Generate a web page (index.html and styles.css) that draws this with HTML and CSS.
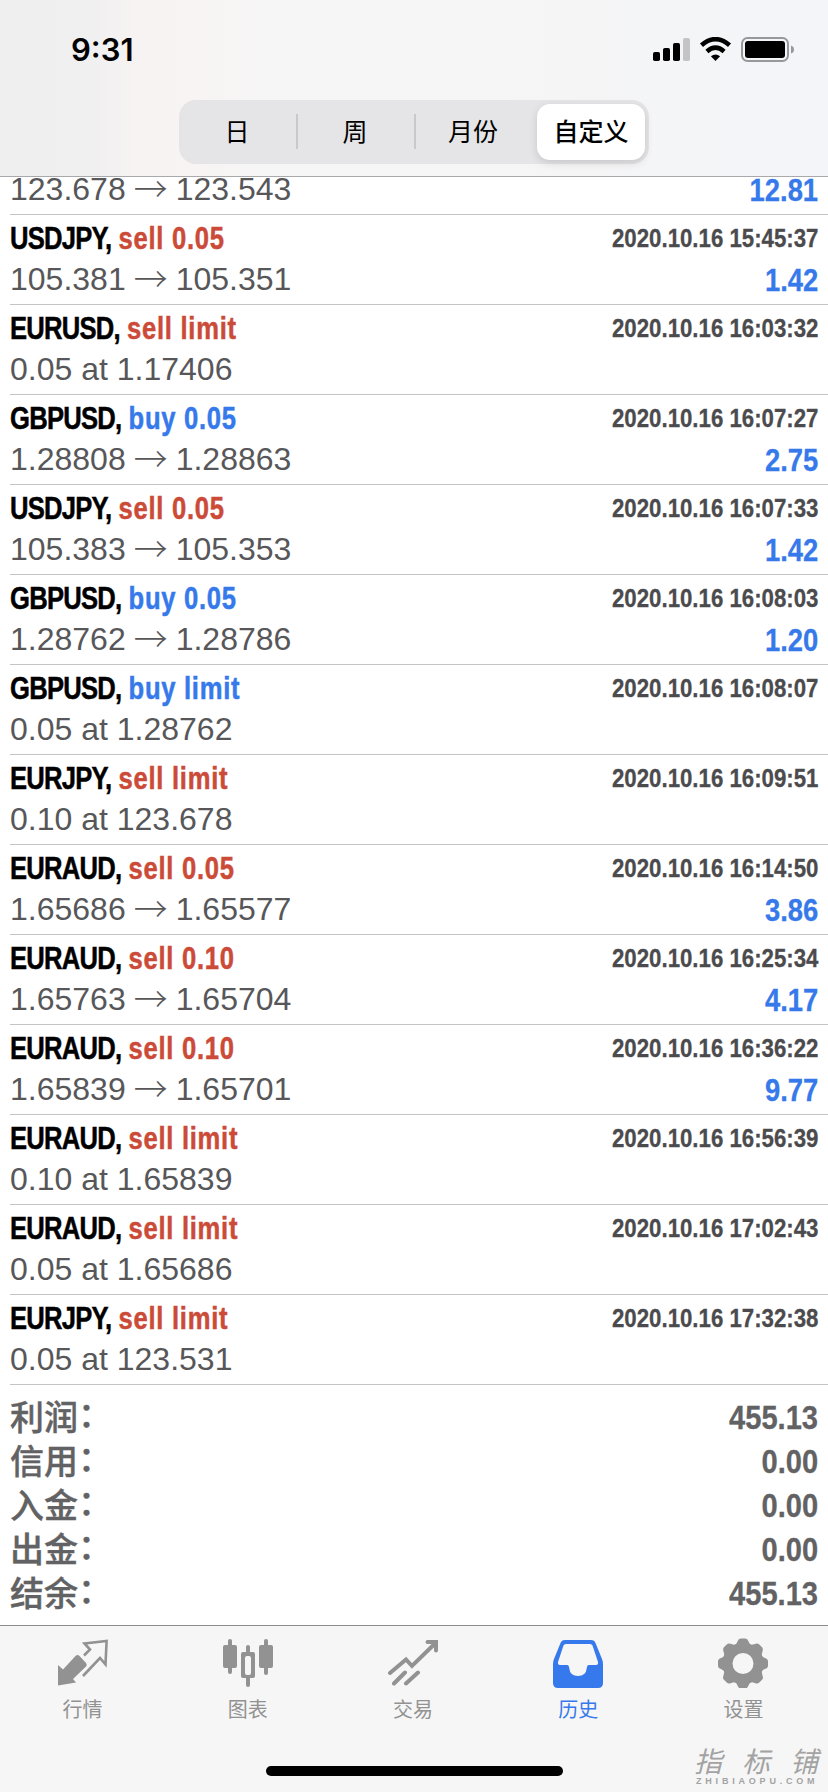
FILE: index.html
```html
<!DOCTYPE html>
<html lang="zh-CN">
<head>
<meta charset="utf-8">
<title>历史</title>
<link rel="stylesheet" href="styles.css">
</head>
<body>
<div class="screen">
  <header class="header">
    <div class="status">
      <span class="time">9:31</span>
      <svg class="status-icons" width="142" height="26" viewBox="0 0 142 26">
        <rect x="0" y="15" width="7" height="9" rx="1.8"/>
        <rect x="10" y="11" width="7" height="13" rx="1.8"/>
        <rect x="20" y="6" width="7" height="18" rx="1.8"/>
        <rect x="30" y="1" width="7" height="23" rx="1.8" fill="#c4c4c6"/>
        <g fill="none" stroke="#000" stroke-width="4.6">
          <path d="M48.5 8.3Q62.5-3.9 76.5 8.3"/>
          <path d="M53.900 14.400Q62.500 7 71.100 14.400"/>
        </g>
        <path d="M62.500 24L57.900 19.200Q62.500 15.600 67.100 19.200Z"/>
        <rect x="89" y="1" width="46" height="23" rx="5.500" fill="none" stroke="#98989a" stroke-width="2"/>
        <rect x="92" y="4" width="40" height="17" rx="3"/>
        <path d="M138 8.500Q141 9.500 141 12.500T138 16.500Z" fill="#98989a"/>
      </svg>
    </div>
    <nav class="segments">
      <span class="seg">日</span><span class="seg line">周</span><span class="seg line">月份</span><span class="seg selected">自定义</span>
    </nav>
  </header>
  <main class="list">
    <div class="row partial"><div class="bottom"><span class="price">123.678<i class="arrow">→</i>123.543</span><b class="profit">12.81</b></div></div>
    <div class="row"><div class="top"><span class="name"><b class="sym">USDJPY,</b><b class="act sell">sell 0.05</b></span><b class="date">2020.10.16 15:45:37</b></div><div class="bottom"><span class="price">105.381<i class="arrow">→</i>105.351</span><b class="profit">1.42</b></div></div>
    <div class="row"><div class="top"><span class="name"><b class="sym">EURUSD,</b><b class="act sell">sell limit</b></span><b class="date">2020.10.16 16:03:32</b></div><div class="bottom"><span class="price">0.05 at 1.17406</span></div></div>
    <div class="row"><div class="top"><span class="name"><b class="sym">GBPUSD,</b><b class="act buy">buy 0.05</b></span><b class="date">2020.10.16 16:07:27</b></div><div class="bottom"><span class="price">1.28808<i class="arrow">→</i>1.28863</span><b class="profit">2.75</b></div></div>
    <div class="row"><div class="top"><span class="name"><b class="sym">USDJPY,</b><b class="act sell">sell 0.05</b></span><b class="date">2020.10.16 16:07:33</b></div><div class="bottom"><span class="price">105.383<i class="arrow">→</i>105.353</span><b class="profit">1.42</b></div></div>
    <div class="row"><div class="top"><span class="name"><b class="sym">GBPUSD,</b><b class="act buy">buy 0.05</b></span><b class="date">2020.10.16 16:08:03</b></div><div class="bottom"><span class="price">1.28762<i class="arrow">→</i>1.28786</span><b class="profit">1.20</b></div></div>
    <div class="row"><div class="top"><span class="name"><b class="sym">GBPUSD,</b><b class="act buy">buy limit</b></span><b class="date">2020.10.16 16:08:07</b></div><div class="bottom"><span class="price">0.05 at 1.28762</span></div></div>
    <div class="row"><div class="top"><span class="name"><b class="sym">EURJPY,</b><b class="act sell">sell limit</b></span><b class="date">2020.10.16 16:09:51</b></div><div class="bottom"><span class="price">0.10 at 123.678</span></div></div>
    <div class="row"><div class="top"><span class="name"><b class="sym">EURAUD,</b><b class="act sell">sell 0.05</b></span><b class="date">2020.10.16 16:14:50</b></div><div class="bottom"><span class="price">1.65686<i class="arrow">→</i>1.65577</span><b class="profit">3.86</b></div></div>
    <div class="row"><div class="top"><span class="name"><b class="sym">EURAUD,</b><b class="act sell">sell 0.10</b></span><b class="date">2020.10.16 16:25:34</b></div><div class="bottom"><span class="price">1.65763<i class="arrow">→</i>1.65704</span><b class="profit">4.17</b></div></div>
    <div class="row"><div class="top"><span class="name"><b class="sym">EURAUD,</b><b class="act sell">sell 0.10</b></span><b class="date">2020.10.16 16:36:22</b></div><div class="bottom"><span class="price">1.65839<i class="arrow">→</i>1.65701</span><b class="profit">9.77</b></div></div>
    <div class="row"><div class="top"><span class="name"><b class="sym">EURAUD,</b><b class="act sell">sell limit</b></span><b class="date">2020.10.16 16:56:39</b></div><div class="bottom"><span class="price">0.10 at 1.65839</span></div></div>
    <div class="row"><div class="top"><span class="name"><b class="sym">EURAUD,</b><b class="act sell">sell limit</b></span><b class="date">2020.10.16 17:02:43</b></div><div class="bottom"><span class="price">0.05 at 1.65686</span></div></div>
    <div class="row"><div class="top"><span class="name"><b class="sym">EURJPY,</b><b class="act sell">sell limit</b></span><b class="date">2020.10.16 17:32:38</b></div><div class="bottom"><span class="price">0.05 at 123.531</span></div></div>
    <section class="totals">
      <div class="total"><span>利润<i>：</i></span><b>455.13</b></div>
      <div class="total"><span>信用<i>：</i></span><b>0.00</b></div>
      <div class="total"><span>入金<i>：</i></span><b>0.00</b></div>
      <div class="total"><span>出金<i>：</i></span><b>0.00</b></div>
      <div class="total"><span>结余<i>：</i></span><b>455.13</b></div>
    </section>
  </main>
  <footer class="tabbar">
    <div class="tabs">
      <div class="tab">
        <svg width="50" height="50" viewBox="0 0 50 50"><path fill="currentColor" d="M0 27L5 31.500L17.500 18Q19.500 16 21.500 18L28 25Q29.500 27 28 28.500L15 41L18 44.500L0 47.500Z"/><path fill="none" stroke="currentColor" stroke-width="2.600" d="M26 17.500L32 11.500L26.500 5.500L48.600 3L47.500 26.500L42 20L25 38"/></svg>
        <span>行情</span>
      </div>
      <div class="tab">
        <svg width="50" height="50" viewBox="0 0 50 50" fill="currentColor"><rect y="7" width="14" height="23" rx="2"/><rect x="5" y="1" width="4" height="35" rx="2"/><rect x="36" y="7" width="14" height="23" rx="2"/><rect x="41" y="1" width="4" height="36" rx="2"/><path fill-rule="evenodd" d="M23 9a2 2 0 0 1 4 0v5h3a2 2 0 0 1 2 2v22a2 2 0 0 1-2 2h-3v7a2 2 0 0 1-4 0v-7h-3a2 2 0 0 1-2-2V16a2 2 0 0 1 2-2h3ZM22 20v15a2 2 0 0 0 2 2h2a2 2 0 0 0 2-2V20a2 2 0 0 0-2-2h-2a2 2 0 0 0-2 2Z"/></svg>
        <span>图表</span>
      </div>
      <div class="tab">
        <svg width="50" height="50" viewBox="0 0 50 50" fill="none" stroke="currentColor" stroke-width="4" stroke-linecap="round"><path d="M2 35L18 21.500L24 28L47 5.500M39.500 4H48V12.500M6 45.500L17 34.500M18 45.500L30 34.500"/></svg>
        <span>交易</span>
      </div>
      <div class="tab active">
        <svg width="50" height="50" viewBox="0 0 50 50"><path fill="currentColor" fill-rule="evenodd" d="M12 2H38Q41.500 2 42.500 5L49 21Q50 23 50 26V45Q50 50 45 50H5Q0 50 0 45V26Q0 23 1 21L7.500 5Q8.500 2 12 2ZM13 6Q11 6 10.500 7.500L5 24Q4.500 27 7 27H14Q16 27 16.200 30Q17 38 25 38Q33 38 33.800 30Q34 27 36 27H43Q45.500 27 45 24L39.500 7.500Q39 6 37 6Z"/></svg>
        <span>历史</span>
      </div>
      <div class="tab">
        <svg width="50" height="50" viewBox="-25 -25.500 50 50" fill="currentColor">
          <defs><path id="tooth" d="M-9-18Q-6.500-19-5.500-22Q-4.500-25-2-25H2Q4.500-25 5.500-22Q6.500-19 9-18L0-12Z"/></defs>
          <circle r="15.500" fill="none" stroke="currentColor" stroke-width="10"/>
          <use href="#tooth"/><use href="#tooth" transform="rotate(45)"/><use href="#tooth" transform="rotate(90)"/><use href="#tooth" transform="rotate(135)"/><use href="#tooth" transform="rotate(180)"/><use href="#tooth" transform="rotate(225)"/><use href="#tooth" transform="rotate(270)"/><use href="#tooth" transform="rotate(315)"/>
        </svg>
        <span>设置</span>
      </div>
    </div>
    <div class="home"></div>
    <div class="mark"><span class="mark-name">指标铺</span><span class="mark-url">ZHIBIAOPU.COM</span></div>
  </footer>
</div>
</body>
</html>
```
FILE: styles.css
```css
* { box-sizing: border-box; }
body { margin: 0; background: #fff; }
.screen {
  width: 828px; height: 1792px; overflow: hidden;
  display: flex; flex-direction: column;
  font-family: "Liberation Sans", "Noto Sans CJK SC", sans-serif;
}
.header {
  height: 177px; flex: none; border-bottom: 1px solid #a9a9ab;
  background: linear-gradient(90deg, #efeff0 0, #f1f0f1 95px, #f7f3f2 140px, #f7f4f3 200px, #f6f6f7 290px, #f5f5f6 600px, #f3f5f9 828px);
}
.status {
  height: 100px; padding: 0 33px 0 71px;
  display: flex; justify-content: space-between; align-items: center;
}
.time { font: 600 31px/40px Inter, sans-serif; }
.status-icons { flex: none; }
.segments {
  width: 470px; height: 64px; margin-left: 179px; padding: 4px;
  display: flex; border-radius: 17px; background: #e5e4e6;
  font: 400 25px/53px "Noto Sans CJK SC", sans-serif; text-align: center;
}
.seg { width: 118px; height: 56px; flex: none; }
.seg:first-child { width: 113px; padding-right: 5px; }
.line { background: linear-gradient(#c9c9cb, #c9c9cb) 0 10px / 2px 35px no-repeat; }
.line + .line + .selected { width: 108px; margin-left: 5px; }
.selected { border-radius: 13px; background: #fff; font-weight: 500; box-shadow: 0 3px 8px rgba(0,0,0,.13); }
.list { height: 1448px; flex: none; overflow: hidden; }
.row { height: 90px; margin-left: 10px; padding: 3px 10px 0 0; border-bottom: 1px solid #c4c4c6; }
.partial { height: 38px; padding-top: 0; display: flex; flex-direction: column; justify-content: flex-end; }
.partial .bottom { flex: none; margin-bottom: 4px; }
.top, .bottom { height: 41px; display: flex; align-items: center; white-space: nowrap; }
/* condensed bold face, squeezed towards the edge each text is aligned to */
.name { display: flex; font-size: 32px; transform: scaleX(.8); transform-origin: left; -webkit-text-stroke: .5px; }
.sym { letter-spacing: -.95px; }
.act { margin-left: 9px; letter-spacing: .9px; }
.sell { color: #cb4b38; }
.buy { color: #3679ea; }
.date, .profit, .total b { transform: scaleX(.855); transform-origin: right; -webkit-text-stroke: .3px; }
.date { margin-left: auto; font-size: 26px; color: #4b4b4e; }
.price { font-size: 32px; color: #57575a; }
.arrow { display: inline-block; width: 50px; text-align: center; font: 300 34px/30px "Noto Sans CJK SC", sans-serif; transform: translateY(2px); }
.profit { margin: 2px 0 0 auto; font-size: 32px; color: #3679ea; }
.totals { padding: 10px 10px 0 10px; color: #626264; }
.total { height: 44px; display: flex; justify-content: space-between; align-items: center; }
.total span { font: 500 34px/44px "Noto Sans CJK SC", sans-serif; margin-top: -3px; -webkit-text-stroke: .4px; }
.total i { display: inline-block; font-style: normal; transform: translateY(-3px); }
.total b { font-size: 34px; }
.tabbar { position: relative; height: 167px; flex: none; border-top: 1px solid #8c8c8e; background: #f6f6f6; }
.tabs { display: flex; padding: 12px 2px 0 0; }
.tab { flex: 1; display: flex; flex-direction: column; align-items: center; color: #929292; }
.tab span { margin-top: 7px; font: 400 20px/28px "Noto Sans CJK SC", sans-serif; }
.tab.active { color: #3679ed; }
.home { width: 297px; height: 10px; margin: 43px auto 0; border-radius: 5px; background: #000; }
.mark { position: absolute; left: 694px; top: 118px; width: 128px; color: #a3a3a3; white-space: nowrap; }
.mark-name { display: block; font: italic 400 28px/32px "Noto Sans CJK SC", sans-serif; letter-spacing: 20px; }
.mark-url { display: block; margin-left: 2px; font: 700 9px/10px "Liberation Sans", sans-serif; letter-spacing: 3.800px; }
```
